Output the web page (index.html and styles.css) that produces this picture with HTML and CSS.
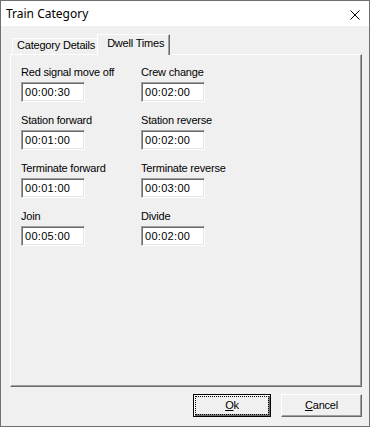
FILE: index.html
```html
<!DOCTYPE html>
<html lang="en">
<head>
    <meta charset="UTF-8">
    <title>Train Category</title>
    <link rel="stylesheet" href="styles.css">
</head>
<body>
    <div class="window">
        <div class="titlebar">
            <span class="title">Train Category</span>
            <svg class="close" width="10" height="10" viewBox="0 0 10 10">
                <path d="M0.5 0.5 L9.5 9.5 M9.5 0.5 L0.5 9.5" stroke="#000" stroke-width="1" fill="none"/>
            </svg>
        </div>
        <div class="body">
            <div class="tabs">
                <div class="tab">Category Details</div>
                <div class="tab active">Dwell Times</div>
            </div>
            <div class="panel">
                <div class="fields">
                    <label class="field"><span class="label">Red signal move off</span><input class="time" type="text" value="00:00:30"></label>
                    <label class="field"><span class="label">Crew change</span><input class="time" type="text" value="00:02:00"></label>
                    <label class="field"><span class="label">Station forward</span><input class="time" type="text" value="00:01:00"></label>
                    <label class="field"><span class="label">Station reverse</span><input class="time" type="text" value="00:02:00"></label>
                    <label class="field"><span class="label">Terminate forward</span><input class="time" type="text" value="00:01:00"></label>
                    <label class="field"><span class="label">Terminate reverse</span><input class="time" type="text" value="00:03:00"></label>
                    <label class="field"><span class="label">Join</span><input class="time" type="text" value="00:05:00"></label>
                    <label class="field"><span class="label">Divide</span><input class="time" type="text" value="00:02:00"></label>
                </div>
            </div>
            <div class="footer">
                <button class="btn default"><u>O</u>k</button>
                <button class="btn cancel"><u>C</u>ancel</button>
            </div>
        </div>
    </div>
</body>
</html>
```

FILE: styles.css
```css
body {
    margin: 0;
    padding: 0;
    background: #f0f0f0;
    font-family: 'Liberation Sans', Arial, sans-serif;
    font-size: 11px;
    color: #000;
}
.window {
    width: 370px;
    height: 427px;
    box-sizing: border-box;
    border: 1px solid #707070;
    display: flex;
    flex-direction: column;
    background: #f0f0f0;
    overflow: hidden;
}
.titlebar {
    height: 25px;
    flex: none;
    background: #fff;
    display: flex;
    align-items: center;
    padding-left: 5px;
}
.title {
    flex: 1;
    font-family: 'Noto Sans', sans-serif;
    font-size: 12px;
    line-height: 25px;
}
.close {
    display: block;
    margin: 2px 9px 0 0;
}
.body {
    flex: 1;
    display: flex;
    flex-direction: column;
    padding: 8px 7px 9px 9px;
    letter-spacing: -0.2px;
}
/* tab strip */
.tabs {
    display: flex;
    align-items: flex-end;
    padding-left: 2px;
    height: 20px;
}
.tab {
    line-height: 13px;
    padding: 0 3px 2px 4px;
    border-top: 1px solid #fff;
    border-left: 1px solid #fff;
    border-right: 1px solid #696969;
    white-space: nowrap;
}
.tab.active {
    position: relative;
    z-index: 1;
    margin-left: -2px;
    margin-bottom: -1px;
    padding: 2px 5px 5px 9px;
    background: #f0f0f0;
    box-shadow: inset -1px 0 #a0a0a0;
}
.panel {
    flex: 1;
    border: 1px solid;
    border-color: #fff #696969 #696969 #fff;
    box-shadow: inset -1px -1px #a0a0a0;
    padding: 11px 10px;
}
.fields {
    display: grid;
    grid-template-columns: 120px 120px;
    row-gap: 12px;
}
.field {
    display: flex;
    flex-direction: column;
    gap: 3px;
}
.label {
    line-height: 13px;
    white-space: nowrap;
}
.time {
    width: 64px;
    height: 20px;
    box-sizing: border-box;
    margin: 0;
    padding: 0 0 0 3px;
    border: 1px solid;
    border-color: #a0a0a0 #fff #fff #a0a0a0;
    box-shadow: inset 1px 1px #696969, inset -1px -1px #e3e3e3;
    background: #fff;
    font-family: 'Liberation Sans', Arial, sans-serif;
    font-size: 11px;
    letter-spacing: 0.3px;
    line-height: 18px;
    color: #000;
    outline: none;
}
/* buttons */
.footer {
    display: flex;
    justify-content: flex-end;
    gap: 10px;
    margin-top: 7px;
}
.btn {
    height: 23px;
    box-sizing: border-box;
    margin: 0;
    padding: 0;
    background: #f0f0f0;
    font-family: 'Liberation Sans', Arial, sans-serif;
    font-size: 11px;
    letter-spacing: -0.2px;
    line-height: 13px;
    color: #000;
    border: 1px solid;
    border-color: #fff #696969 #696969 #fff;
    box-shadow: inset -1px -1px #a0a0a0;
}
.btn.default {
    width: 78px;
    border-color: #000;
    box-shadow: inset 1px 1px #fff, inset -1px -1px #696969, inset -2px -2px #a0a0a0;
    outline: 1px dotted #000;
    outline-offset: -3px;
}
.btn.cancel {
    width: 81px;
}
```
